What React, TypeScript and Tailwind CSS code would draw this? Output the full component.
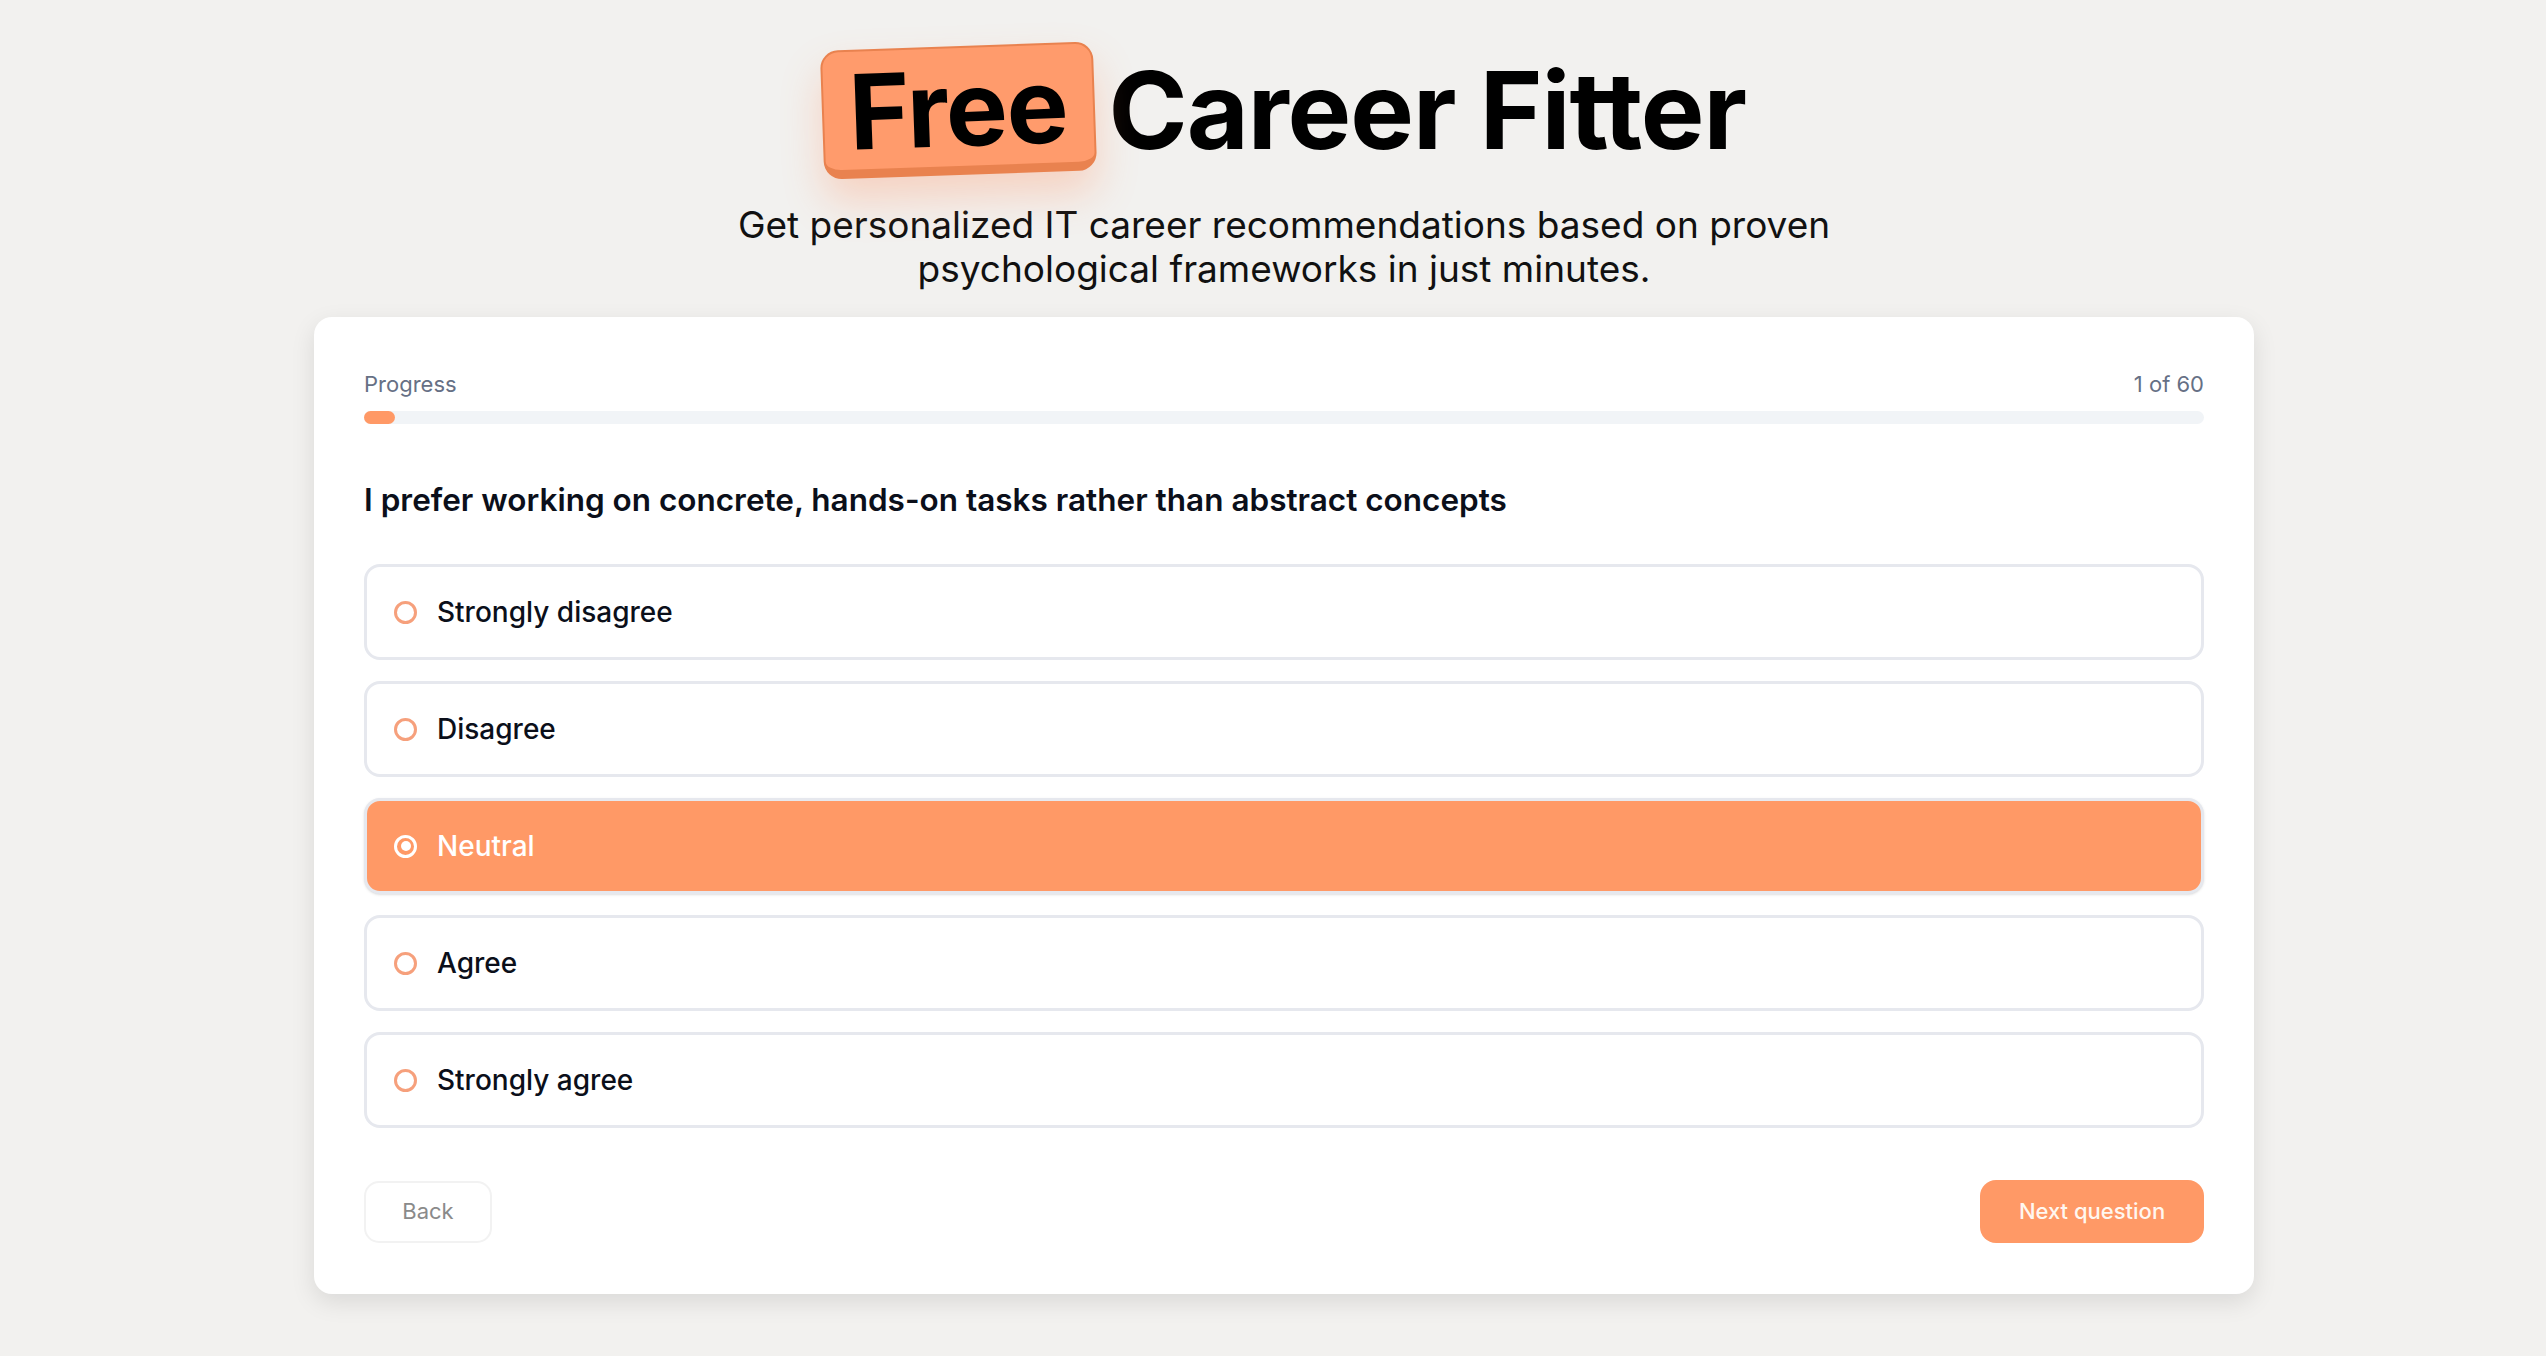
import { useState } from 'react'

const OPTIONS = ['Strongly disagree', 'Disagree', 'Neutral', 'Agree', 'Strongly agree']

export default function App() {
  const [selected, setSelected] = useState(2)
  const current = 1
  const total = 60

  return (
    <div
      className="min-h-screen bg-[#f2f1ef] pl-[22px] pt-[46px] pb-16"
      style={{ fontFamily: 'Inter, "Noto Sans", sans-serif' }}
    >
      {/* Title */}
      <div className="flex items-center justify-center gap-[14px]">
        <div className="-rotate-2 rounded-[18px] border-2 border-b-[9px] border-[#e9824f] bg-[#ff9b6c] px-[25px] pt-[8px] pb-[6px] shadow-[0_22px_40px_rgba(255,140,90,0.30)]">
          <span className="block text-[104px] font-bold leading-none tracking-[-0.01em] text-black">
            Free
          </span>
        </div>
        <h1 className="text-[107px] font-bold leading-none tracking-[-0.01em] text-black">
          Career Fitter
        </h1>
      </div>

      {/* Subtitle */}
      <p className="mx-auto mt-[28px] max-w-[1180px] text-center text-[37px] leading-[44px] text-[#111]">
        Get personalized IT career recommendations based on proven psychological frameworks in just minutes.
      </p>

      {/* Card */}
      <div className="mx-auto mt-[26px] w-[1940px] rounded-[18px] bg-white px-[50px] pt-[51px] pb-[51px] shadow-[0_8px_24px_rgba(0,0,0,0.10)]">
        {/* Progress */}
        <div className="flex items-center justify-between text-[22px] leading-[32px] text-[#667085]">
          <span>Progress</span>
          <span>
            {current} of {total}
          </span>
        </div>
        <div className="mt-[11px] h-[13px] w-full rounded-full bg-[#f1f4f7]">
          <div
            className="h-full rounded-full bg-[#ff9966]"
            style={{ width: `${(current / total) * 100}%` }}
          />
        </div>

        {/* Question */}
        <h2 className="mt-[56px] text-[31.5px] font-semibold leading-[40px] text-[#0b0f1a]">
          I prefer working on concrete, hands-on tasks rather than abstract concepts
        </h2>

        {/* Options */}
        <div className="mt-[44px] flex flex-col gap-[21px]">
          {OPTIONS.map((label, i) => {
            const active = i === selected
            return (
              <button
                key={label}
                onClick={() => setSelected(i)}
                className={
                  active
                    ? 'flex h-[96px] items-center gap-[20px] rounded-[16px] border-[3px] border-[#e6e8ee] bg-[#ff9966] pl-[27px] text-left shadow-sm'
                    : 'flex h-[96px] items-center gap-[20px] rounded-[16px] border-[3px] border-[#e6e8ee] bg-white pl-[27px] text-left'
                }
              >
                {active ? (
                  <span className="flex h-[23px] w-[23px] items-center justify-center rounded-full border-[3px] border-white">
                    <span className="h-[10px] w-[10px] rounded-full bg-white" />
                  </span>
                ) : (
                  <span className="h-[23px] w-[23px] rounded-full border-[3px] border-[#f6a07c]" />
                )}
                <span
                  className={
                    active
                      ? 'text-[28px] font-medium text-white'
                      : 'text-[28px] font-medium text-[#0b0f1a]'
                  }
                >
                  {label}
                </span>
              </button>
            )
          })}
        </div>

        {/* Actions */}
        <div className="mt-[52px] flex items-center justify-between">
          <button className="h-[62px] w-[128px] rounded-[15px] border-2 border-[#f2f2f2] bg-white text-[22px] text-[#8a8a8a]">
            Back
          </button>
          <button className="h-[63px] w-[224px] rounded-[16px] bg-[#ff9966] text-[22px] font-medium text-[#fff7f0]">
            Next question
          </button>
        </div>
      </div>
    </div>
  )
}
